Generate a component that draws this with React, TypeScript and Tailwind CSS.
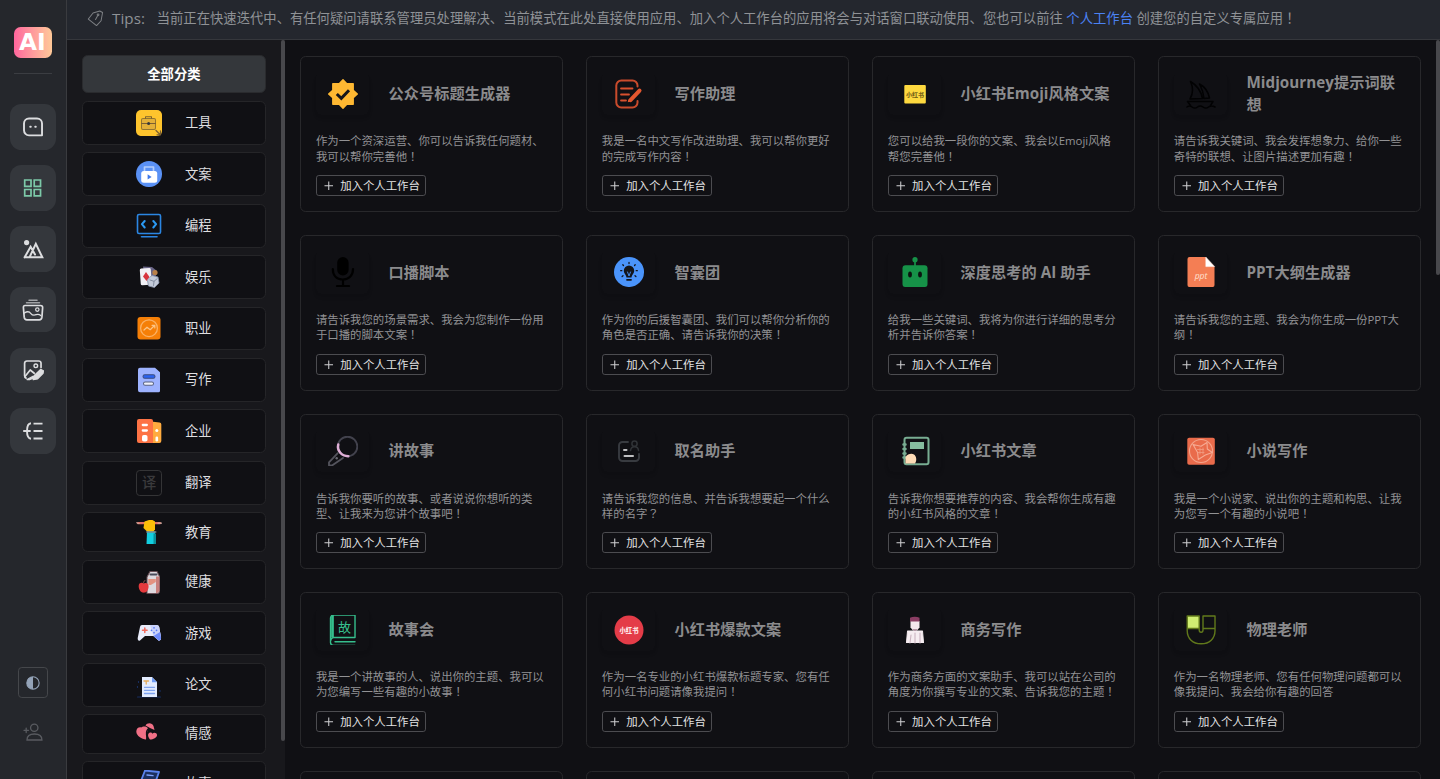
import type { ReactNode } from 'react';

const FONT = "font-['Open_Sans','Noto_Sans_CJK_SC',sans-serif]";

/* Full-width ! and ? are set from the TC face, which centres them in the em box. */
function Zh({ text }: { text: string }) {
  return (
    <>
      {text.split(/([！？])/).map((part, i) =>
        part === '！' || part === '？' ? (
          <span key={i} className="inline-block h-4 align-top font-['Noto_Sans_CJK_TC',sans-serif] leading-4">{part}</span>
        ) : (
          part
        ),
      )}
    </>
  );
}

/* ---------- rail icons ---------- */
function RailSvg({ children, color = 'text-[#dcdddf]' }: { children: ReactNode; color?: string }) {
  return (
    <svg viewBox="0 0 22 22" className={`h-[23.2px] w-[23.2px] ${color}`} fill="none" stroke="currentColor" strokeWidth="1.5" strokeLinecap="round" strokeLinejoin="round">
      {children}
    </svg>
  );
}

const rail: { key: string; icon: ReactNode }[] = [
  {
    key: 'chat',
    icon: (
      <RailSvg>
        <path d="M20 19.3H7A5 5 0 0 1 2 14.300V7.500a5 5 0 0 1 5-5h8a5 5 0 0 1 5 5z" strokeWidth="1.900" />
        <path d="M8.200 10.800h.6M13.200 10.800h.6" strokeWidth="1.900" />
      </RailSvg>
    ),
  },
  {
    key: 'apps',
    icon: (
      <RailSvg color="text-[#7cc9a8]">
        <path d="M2.700 3h6.300v6.300H2.700zM12.200 3h6.300v6.300h-6.300zM2.700 12.500h6.300v6.300H2.700zM12.200 12.500h6.300v6.300h-6.300z" strokeWidth="1.700" strokeLinejoin="miter" />
      </RailSvg>
    ),
  },
  {
    key: 'draw',
    icon: (
      <RailSvg>
        <circle cx="4.600" cy="4.600" r="2.600" fill="currentColor" stroke="none" />
        <path d="M2.600 19.300 8.600 8.800 13 16.500M7.500 19.300l6.300-13.500 6.500 13.500zM2.600 19.300h6" strokeWidth="2" strokeLinejoin="miter" />
      </RailSvg>
    ),
  },
  {
    key: 'gallery',
    icon: (
      <RailSvg>
        <path d="M7 1.300h8M4.500 3.800h13" strokeWidth="1.500" opacity=".65" />
        <path d="M3 6.500h15.500c1.500 0 2.200.9 2.100 2.100l-.7 9.500c-.2 1.700-1.300 2.700-2.700 2.700H4.900c-1.500 0-2.500-1-2.700-2.700l-.8-9.500C1.300 7.400 1.700 6.500 3 6.500z" strokeWidth="1.700" />
        <circle cx="15.300" cy="10.600" r="1.700" strokeWidth="1.200" />
        <path d="M2.400 14c3-2 5-1.500 6.500.5s3 2 5.200 1.200 3.400-.2 4.600.8" strokeWidth="1.300" />
      </RailSvg>
    ),
  },
  {
    key: 'edit',
    icon: (
      <RailSvg>
        <path d="M19 8.500V4.300A2.300 2.300 0 0 0 16.700 2H4.900a2.300 2.300 0 0 0-2.300 2.300v12.500c0 1.300.5 2 1.500 2.300" strokeWidth="1.700" />
        <circle cx="13.800" cy="6.800" r="1.800" strokeWidth="1.400" />
        <path d="M3 17.500 8.200 11l4 3.200" strokeWidth="1.700" />
        <path d="M12.300 16.300 18.600 10.300l2.800 1.500-.3 2.400-5.700 5.800-4.200.6zM5 20.500l6-3.300 2 1.500-5 1.800z" fill="currentColor" strokeWidth="1.200" />
      </RailSvg>
    ),
  },
  {
    key: 'mind',
    icon: (
      <RailSvg>
        <path d="M1.200 11h7.500M9 3.300c-3.800.3-4 4-4 7.700s.2 7.400 4 7.700M11.500 3.600h9M11.500 11h9M11.500 18.400h9" strokeWidth="1.900" strokeLinecap="butt" />
      </RailSvg>
    ),
  },
];

/* ---------- category icons ---------- */
function CatSvg({ children }: { children?: ReactNode }) {
  return (
    <svg viewBox="0 0 26 26" className="h-[27.4px] w-[27.4px] shrink-0" fill="none" strokeLinecap="round" strokeLinejoin="round">
      {children}
    </svg>
  );
}

const categories: { name: string; size: string; icon: ReactNode }[] = [
  {
    name: '工具',
    size: 'h-[46.15px]',
    icon: (
      <CatSvg>
        <rect width="26" height="26" rx="5" fill="#fec42d" />
        <rect x="5.500" y="8.500" width="14" height="11" rx="1.500" fill="#e3b038" stroke="#94752f" />
        <path d="M9.500 8.300V6.700h6v1.600M5.500 13.500h14" stroke="#7c6030" />
        <circle cx="12.600" cy="13.600" r="1.500" fill="#33373d" />
        <path d="m20 20.500 4 4M24.500 21v3.800H21" stroke="#7c6030" strokeWidth="1.300" />
      </CatSvg>
    ),
  },
  {
    name: '文案',
    size: 'h-[46.15px]',
    icon: (
      <CatSvg>
        <circle cx="13" cy="13" r="13" fill="#5a91f5" />
        <path d="M8.500 9.500V6h9v3.500" stroke="#b3cdfb" strokeWidth="1.700" />
        <rect x="5.200" y="10" width="16" height="11.800" rx="2.500" fill="#fff" />
        <path d="m11.600 13.300 4 2.600-4 2.600z" fill="#3e78ea" />
      </CatSvg>
    ),
  },
  {
    name: '编程',
    size: 'h-[46.15px]',
    icon: (
      <CatSvg>
        <rect x="1.500" y="1.500" width="23" height="19" rx="1.500" stroke="#2b86e3" strokeWidth="1.600" />
        <path d="M8.700 8l-2.800 3.200 2.800 3.300M17.300 8l2.800 3.200-2.800 3.300" stroke="#2b9af3" strokeWidth="2" />
        <path d="M5.500 23.700h15.500" stroke="#2b86e3" strokeWidth="1.600" />
      </CatSvg>
    ),
  },
  {
    name: '娱乐',
    size: 'h-[46.15px]',
    icon: (
      <CatSvg>
        <path d="m7 2.500 9 .5 5 4-2 9-9 4z" fill="#686486" />
        <circle cx="19" cy="8.500" r="2.600" fill="#b98048" />
        <rect x="4.300" y="4.300" width="11" height="16.700" rx="1.500" fill="#f1f0f5" transform="rotate(-4 10 13)" />
        <path d="m10 8 3.500 5-3 4-3.500-4.500z" fill="#d8343e" />
        <path d="m16 11.500 6 1.500 1 6-4.500 4.500-6-1.500-1-5.500z" fill="#c3cad9" stroke="#8790a8" strokeWidth=".8" />
        <path d="m14 16 4 1.300 3-2.500M18 17.500l-.5 4" stroke="#7b8499" strokeWidth=".9" />
      </CatSvg>
    ),
  },
  {
    name: '职业',
    size: 'h-[46.15px]',
    icon: (
      <CatSvg>
        <rect x="1.500" y="2" width="23" height="22.500" rx="3" fill="#f57f07" />
        <circle cx="13" cy="13.200" r="8.400" stroke="#fbb163" strokeWidth="1.300" />
        <path d="m8 15 3-2.800 3.200 2.500 4.300-4.200M16 10.300h2.800V13" stroke="#fdc484" strokeWidth="1.200" />
      </CatSvg>
    ),
  },
  {
    name: '写作',
    size: 'h-[46.15px]',
    icon: (
      <CatSvg>
        <path d="M4 .8h15l5 4.500v18.500a1.500 1.500 0 0 1-1.500 1.500H4a2 2 0 0 1-2-2V2.800a2 2 0 0 1 2-2z" fill="#9db2fe" />
        <rect x="7" y="7.800" width="12" height="3.400" rx="1.700" fill="#2a63f2" stroke="#3c4c80" />
        <rect x="7.500" y="15" width="10" height="3.300" rx="1.600" fill="#eef1fa" stroke="#596281" />
      </CatSvg>
    ),
  },
  {
    name: '企业',
    size: 'h-[46.15px]',
    icon: (
      <CatSvg>
        <path d="M15 3.500 23.500 4.500a1.800 1.800 0 0 1 1.800 1.800V23a2 2 0 0 1-2 2H15z" fill="#ffab3f" />
        <path d="M3 1h12a2 2 0 0 1 2 2v22H3a2 2 0 0 1-2-2V3a2 2 0 0 1 2-2z" fill="#fd7345" />
        <path d="M6.800 7h4M6.800 12.500h4" stroke="#fff" strokeWidth="2.300" />
        <rect x="6" y="17" width="5.500" height="6.500" rx="1.800" fill="#fff" />
        <circle cx="20.800" cy="12.500" r="1.500" fill="#fff" />
        <rect x="19.500" y="18.500" width="2.600" height="5" rx="1.300" fill="#fff" />
      </CatSvg>
    ),
  },
  {
    name: '翻译',
    size: 'h-[46.15px]',
    icon: (
      <span className="flex h-[27.4px] w-[27.4px] shrink-0 items-center justify-center rounded-[4px] border border-[#343436] text-[15px] leading-none font-medium text-[#3a3a3c]">
        译
      </span>
    ),
  },
  {
    name: '教育',
    size: 'h-[42.2px]',
    icon: (
      <CatSvg>
        <path d="M2 4.200h22" stroke="#e06f62" strokeWidth="2.200" />
        <path d="M.8 3.700 3 4.500M22 4.200h3.500" stroke="#c9a8a0" strokeWidth="1.200" />
        <path d="M8.500 2.500 13 1h3.500l2.500 1.500v8L17 13h-5.500l-4-4 .3-2z" fill="#fcbf08" />
        <path d="M11 12.500h8V25H10.500z" fill="#12cfe0" />
        <path d="M17.500 14.500H20V25h-2.500z" fill="#0a8e9a" />
        <path d="M10.800 13h9" stroke="#7f8a90" strokeWidth="1.400" />
      </CatSvg>
    ),
  },
  {
    name: '健康',
    size: 'h-[46.15px]',
    icon: (
      <CatSvg>
        <path d="M14 2.500h7l2.500 5v15.500l-1.500 1.500H11V8z" fill="#ded9de" stroke="#6b5057" />
        <path d="M20 7.500h3.500V22l-2 2H20z" fill="#c97f7c" />
        <path d="M12.300 10h7.500v3l-5 3h-2.500z" fill="#e49280" />
        <path d="M14.500 5.500h6" stroke="#4a4b5a" strokeWidth="2" />
        <path d="M3.500 14.500c2-1.500 3.500-.5 4.500 0 1.500-1 4-.5 4.500 2 .5 3.500-1.500 6.500-3.500 7-1 .2-1.500.2-2.500 0-3-.5-5-6.500-3-9z" fill="#e53a3d" />
        <path d="M7.500 14c0-1 .5-2 1.500-2.500" stroke="#7a4a44" />
      </CatSvg>
    ),
  },
  {
    name: '游戏',
    size: 'h-[46.15px]',
    icon: (
      <CatSvg>
        <path d="M6 5h14.500c1.500 0 2.300.7 2.700 2L25 17.500c.3 2-1 3.500-2.500 3l-5-4.500H9l-5 4.500c-1.500.8-2.500-.5-2.300-2.500L4 7c.3-1.300.8-2 2-2z" fill="#e9ecfb" />
        <path d="M14 5h6.500c1.500 0 2.300.7 2.700 2L25 17.500c.3 2-1 3.500-2.500 3l-5-4.500z" fill="#c9d2fb" />
        <path d="M17.500 16 24 12l1 5.500c.3 2-1 3.500-2.500 3z" fill="#6f8cfd" />
        <path d="M6.500 10.300h4.600M8.800 8v4.600" stroke="#f06a5c" strokeWidth="1.500" />
        <path d="M18 7.800v.01M18 12.700v.01M15.500 10.300h.01M20.500 10.300h.01" stroke="#5578f6" strokeWidth="1.700" />
      </CatSvg>
    ),
  },
  {
    name: '论文',
    size: 'h-[46.15px]',
    icon: (
      <CatSvg>
        <path d="M1.500 25h23" stroke="#162c60" strokeWidth="1.200" />
        <path d="M6 5h10l5 5v15H6z" fill="#e3ecff" />
        <path d="M16 5.200v5h5z" fill="#6f9cf6" />
        <path d="M8 9h4.500M10.200 9v3" stroke="#e5ac5c" strokeWidth="1.300" />
        <path d="M8.500 15.300h10M8.500 18.300h10M8.500 21.500h10" stroke="#7fa3ef" strokeWidth="1.300" />
        <path d="M1.500 15v.01M2.500 10v.01M24 19v.01" stroke="#1c3f8a" strokeWidth="1.300" />
      </CatSvg>
    ),
  },
  {
    name: '情感',
    size: 'h-[41.4px]',
    icon: (
      <CatSvg>
        <path d="M10 18.500c-4-.2-9.700-3.500-9.700-8 0-3.300 2.700-4.800 5-4 1.500-1.600 5.500-1.500 7 1L10.500 13z" fill="#f07086" />
        <path d="M9.500 4.500c1.500-3 6.500-3.300 8 .5l1 4-4.500-2z" fill="#f07086" />
        <path d="M14 18.500c-2-2.500-3-6 0-7 1-.2 2 .3 2.500 1.200 1-1.500 4.500-1 4.500 1.200.2 2.500-4 4.600-7 4.600z" fill="#f07086" />
        <path d="M12.500 7.500c-2.300 2-2.500 6-1 10" stroke="#101014" strokeWidth="1.400" />
      </CatSvg>
    ),
  },
  {
    name: '故事',
    size: 'h-[46.15px]',
    icon: (
      <CatSvg>
        <path d="m9 .5 14 1.500-5 14H3z" stroke="#5b83ee" strokeWidth="1.800" fill="#1c2f5e" />
        <path d="m11 5 6 .6M5 11h12" stroke="#7ea0fb" strokeWidth="1.400" />
      </CatSvg>
    ),
  },
];

/* ---------- app icons ---------- */
function AppSvg({ children }: { children: ReactNode }) {
  return (
    <svg viewBox="0 0 30 30" className="h-[31.600px] w-[31.600px]" fill="none" strokeLinecap="round" strokeLinejoin="round">
      {children}
    </svg>
  );
}

function RedBookText({ color, x, y, size }: { color: string; x: number; y: number; size: number }) {
  return (
    <text x={x} y={y} fontSize={size} fontWeight="900" fill={color} textAnchor="middle">
      小红书
    </text>
  );
}

const apps: { title: string; desc: string; icon: ReactNode }[] = [
  {
    title: '公众号标题生成器',
    desc: '作为一个资深运营、你可以告诉我任何题材、我可以帮你完善他！',
    icon: (
      <AppSvg>
        <path d="m15 .8 3.800 4h6.400v6.500L29.300 15l-4.100 3.800v6.500h-6.400L15 29.300l-3.800-4H4.800v-6.500L.7 15l4.100-3.700V4.800h6.400z" fill="#feb832" stroke="#feb832" strokeWidth="1.400" />
        <path d="m8.800 15 4.500 4.300 7.700-8" stroke="#15151a" strokeWidth="3" strokeLinecap="butt" strokeLinejoin="miter" />
      </AppSvg>
    ),
  },
  {
    title: '写作助理',
    desc: '我是一名中文写作改进助理、我可以帮你更好的完成写作内容！',
    icon: (
      <AppSvg>
        <path d="M23.500 7.500V6.500a5 5 0 0 0-5-5H7.300a5 5 0 0 0-5 5v17a5 5 0 0 0 5 5h11.200a5 5 0 0 0 5-5V22" stroke="#c94b2c" strokeWidth="2" />
        <path d="M7 9.500h11.500M7 15.500h8M7 21.500h5" stroke="#d8502e" strokeWidth="1.800" />
        <path d="m25.500 11.500-9 9.500" stroke="#e2572f" strokeWidth="4" />
        <path d="m14.200 20.200 2.600 2.300-3 .8z" fill="#e2572f" />
      </AppSvg>
    ),
  },
  {
    title: '小红书Emoji风格文案',
    desc: '您可以给我一段你的文案、我会以Emoji风格帮您完善他！',
    icon: (
      <AppSvg>
        <rect x="4.300" y="6" width="21.500" height="18.500" rx="1" fill="#fed93f" />
        <RedBookText color="#7a6618" x={15} y={17.600} size={6} />
      </AppSvg>
    ),
  },
  {
    title: 'Midjourney提示词联想',
    desc: '请告诉我关键词、我会发挥想象力、给你一些奇特的联想、让图片描述更加有趣！',
    icon: (
      <AppSvg>
        <path d="M4.500 2.500c6 3.500 10.500 9.500 12 17L4 20c3-5 3.500-11 .5-17.500zM13.500 5c5 2.500 8.500 7.500 10 14l-5.500.5C17.500 14 16 9.500 13.500 5zM1.500 22.500h25.500l-2.500 4M1.500 22.500l3 4M1 28c2-1.500 3-1.500 5 0s3.500 1.500 5.500 0 3.500-1.500 5.500 0 3.500 1.500 5.500 0 4-1.500 6.500 0" stroke="#020203" strokeWidth="1.500" />
      </AppSvg>
    ),
  },
  {
    title: '口播脚本',
    desc: '请告诉我您的场景需求、我会为您制作一份用于口播的脚本文案！',
    icon: (
      <AppSvg>
        <rect x="9.200" y="0" width="11.400" height="18.500" rx="5.700" fill="#000" />
        <path d="M4.800 12c0 6.500 4 10.500 10 10.500s10.200-4 10.200-10.500M15 22.500v6.500M9 29h12" stroke="#000" strokeWidth="2.200" />
      </AppSvg>
    ),
  },
  {
    title: '智囊团',
    desc: '作为你的后援智囊团、我们可以帮你分析你的角色是否正确、请告诉我你的决策！',
    icon: (
      <AppSvg>
        <circle cx="15" cy="15" r="15" fill="#4a94fb" />
        <path d="M15 8.500a5.200 5.200 0 0 1 5.200 5.200c0 3-2.200 3.300-2.700 6.800h-5c-.5-3.500-2.700-3.800-2.700-6.800A5.200 5.200 0 0 1 15 8.500z" fill="#13151b" />
        <path d="M13 22.800h4" stroke="#13151b" strokeWidth="1.800" />
        <path d="m13.500 15 1.500 4 1.500-4" stroke="#4a94fb" strokeWidth=".9" />
        <path d="M15 6.500v-1M9.500 8.500l-.7-.8M20.500 8.500l.7-.8M7.800 13.700H6.700M22.200 13.700h1.100M9 18.700l-.9.8M21 18.700l.9.8" stroke="#13151b" strokeWidth="1.300" />
      </AppSvg>
    ),
  },
  {
    title: '深度思考的 AI 助手',
    desc: '给我一些关键词、我将为你进行详细的思考分析并告诉你答案！',
    icon: (
      <AppSvg>
        <circle cx="15" cy="2.700" r="2.600" fill="#169248" />
        <path d="M15 3v6" stroke="#169248" strokeWidth="1.700" />
        <rect x="2.500" y="8.300" width="25" height="21.700" rx="3" fill="#169248" />
        <ellipse cx="10" cy="17.500" rx="1.900" ry="3" fill="#0b1410" />
        <ellipse cx="20" cy="17.500" rx="1.900" ry="3" fill="#0b1410" />
      </AppSvg>
    ),
  },
  {
    title: 'PPT大纲生成器',
    desc: '请告诉我您的主题、我会为你生成一份PPT大纲！',
    icon: (
      <AppSvg>
        <path d="M3.500 0h16l9 9.500v18.500a2 2 0 0 1-2 2h-23a2 2 0 0 1-2-2V2a2 2 0 0 1 2-2z" fill="#f47e54" />
        <path d="M19.800.3v9.300h8.500z" fill="#fff" stroke="#fff" strokeWidth=".5" />
        <text x="15" y="21.500" fontSize="8.500" fontStyle="italic" textAnchor="middle" fill="#ffe0d2">ppt</text>
      </AppSvg>
    ),
  },
  {
    title: '讲故事',
    desc: '告诉我你要听的故事、或者说说你想听的类型、让我来为您讲个故事吧！',
    icon: (
      <AppSvg>
        <circle cx="19.500" cy="10.500" r="9.800" stroke="#42424d" strokeWidth="1.900" />
        <path d="M10.300 8.500c-1.500 6 3 11.500 10 11.800" stroke="#dfafd6" strokeWidth="2.500" />
        <path d="m9.500 17.300-8.500 9v3.200h3l11-7.500" stroke="#54545d" strokeWidth="1.800" />
        <circle cx="8.700" cy="22.300" r="1.200" fill="#6a6a72" />
      </AppSvg>
    ),
  },
  {
    title: '取名助手',
    desc: '请告诉我您的信息、并告诉我想要起一个什么样的名字？',
    icon: (
      <AppSvg>
        <path d="M14 6H8.500A3.500 3.500 0 0 0 5 9.500v12A3.500 3.500 0 0 0 8.500 25h13a3.500 3.500 0 0 0 3.500-3.500V18" stroke="#383b40" strokeWidth="1.900" />
        <circle cx="20.500" cy="7.700" r="2.600" stroke="#303337" strokeWidth="1.500" />
        <path d="M16.500 14.500c.5-3 2-3.700 4-3.700s3.700.7 4 3.700" stroke="#303337" strokeWidth="1.500" />
        <path d="M10 14h2.500M10.500 20h8.500" stroke="#c0c0c2" strokeWidth="2" />
      </AppSvg>
    ),
  },
  {
    title: '小红书文章',
    desc: '告诉我你想要推荐的内容、我会帮你生成有趣的小红书风格的文章！',
    icon: (
      <AppSvg>
        <rect x="4.500" y="1.800" width="24" height="26.500" rx="2" stroke="#78ad92" strokeWidth="2" />
        <rect x="10" y="6" width="14" height="7" fill="#86bd9f" />
        <path d="M3.500 8.500h2M3.500 13h2M3.500 17.500h2M3.500 21.500h2" stroke="#78ad92" strokeWidth="2.500" />
        <path d="M5.500 27.500v-6.500c2-3 6-4 8.500-2.500 2.500 1.800 3 6 1 9z" fill="#fddbb5" />
      </AppSvg>
    ),
  },
  {
    title: '小说写作',
    desc: '我是一个小说家、说出你的主题和构思、让我为您写一个有趣的小说吧！',
    icon: (
      <AppSvg>
        <rect x="1.300" y="1.700" width="27.500" height="27" rx="1.800" fill="#e96b4b" />
        <circle cx="15" cy="15" r="11.500" stroke="#f4a58c" strokeWidth="1.100" />
        <path d="m7 8.500 8 1.700 6-3.700.3 6.500 5 3.500-7 2.500-7 4.500-.7-7z" stroke="#f6ab94" strokeWidth="1.100" />
        <path d="M11.500 13.500h6M12 16.500h6M14 12v6M17 12v6" stroke="#f09a80" strokeWidth=".9" />
      </AppSvg>
    ),
  },
  {
    title: '故事会',
    desc: '我是一个讲故事的人、说出你的主题、我可以为您编写一些有趣的小故事！',
    icon: (
      <AppSvg>
        <path d="M27 0H5.500a3 3 0 0 0-3 3v24.500a3.200 3.200 0 0 0 3.200 3H27M2.800 25.500a3 3 0 0 1 3-3H27V0M7 26.700h20" stroke="#36bf8d" strokeWidth="1.400" />
        <path d="M4.500 0v22.500" stroke="#36bf8d" strokeWidth="2.700" strokeLinecap="butt" />
        <text x="16.500" y="16.500" fontSize="13" fontWeight="400" textAnchor="middle" fill="#36bf8d">故</text>
      </AppSvg>
    ),
  },
  {
    title: '小红书爆款文案',
    desc: '作为一名专业的小红书爆款标题专家、您有任何小红书问题请像我提问！',
    icon: (
      <AppSvg>
        <circle cx="15" cy="15" r="14.500" fill="#e43c48" />
        <RedBookText color="#ffe9ea" x={15} y={17.600} size={6.300} />
      </AppSvg>
    ),
  },
  {
    title: '商务写作',
    desc: '作为商务方面的文案助手、我可以站在公司的角度为你撰写专业的文案、告诉我您的主题！',
    icon: (
      <AppSvg>
        <path d="M10.500 6h9v6.500l-2.500 3h-4l-2.500-3z" fill="#f3e6ec" />
        <path d="M10 6.500V2.800c3-1.500 7-1.300 9.500 0v3.700z" fill="#8a3d63" />
        <path d="M12.500 14.500h5l-2.500 2z" fill="#74405b" />
        <path d="M7.500 16h15l1 11.500h-17z" fill="#f6edf1" stroke="#f6edf1" />
        <path d="m11 20-1 8M15 18v10M20 18v10" stroke="#cbb5c1" strokeWidth="1.100" />
      </AppSvg>
    ),
  },
  {
    title: '物理老师',
    desc: '作为一名物理老师、您有任何物理问题都可以像我提问、我会给你有趣的回答',
    icon: (
      <AppSvg>
        <path d="M1.200 1h12v12.500h-12z" fill="#d0ee72" />
        <path d="M1.200 1h12v14c0 1.500.6 2.200 1.900 2.200S17 16.500 17 15V1h12v14.500c0 8-5.500 13.300-13.900 13.300S1.200 23.500 1.200 15.500zM1.200 13.500h12M17 13.500h12" stroke="#61791b" strokeWidth="1.400" />
      </AppSvg>
    ),
  },
  { title: '', desc: '', icon: null },
  { title: '', desc: '', icon: null },
  { title: '', desc: '', icon: null },
  { title: '', desc: '', icon: null },
];

function Rail() {
  return (
    <nav className="flex w-[70px] shrink-0 flex-col items-center border-r border-[#3a3b3f] bg-[#25272c] pt-[28.5px] pb-[39.5px]">
      <div className="flex h-[32.500px] w-10 items-center justify-center rounded-[7px] bg-linear-to-r from-[#ff659d] to-[#ffc998] pr-px pb-px font-['DejaVu_Sans',sans-serif] text-[24.500px] leading-none font-bold text-white">
        AI
      </div>
      <div className="mt-4 h-px w-10 bg-[#3b3d42]" />
      <div className="mt-8 flex flex-col gap-4">
        {rail.map((r) => (
          <button key={r.key} className="flex h-12 w-12 items-center justify-center rounded-xl bg-[#34373c]">
            {r.icon}
          </button>
        ))}
      </div>
      <button className="mt-auto flex h-8 w-8 items-center justify-center rounded-[4px] border border-[#45474b]">
        <svg viewBox="0 0 14 14" className="h-[14.700px] w-[14.700px]">
          <circle cx="7" cy="7" r="6.200" fill="none" stroke="#94a3b8" strokeWidth="1.100" />
          <path d="M7 .8a6.200 6.200 0 0 0 0 12.400z" fill="#94a3b8" />
        </svg>
      </button>
      <svg viewBox="0 0 20 18" className="mt-[27px] h-[19px] w-[21px]" fill="none" stroke="#595b60" strokeWidth="1.300" strokeLinecap="round">
        <circle cx="11.300" cy="4.700" r="3.700" />
        <path d="M4 17c0-3.800 3-6 7.500-6s7.500 2.200 7.500 6zM1 7.300h4.500M3.200 5v4.600" />
      </svg>
    </nav>
  );
}

function TipsBar() {
  return (
    <header className="flex h-[42.5px] shrink-0 items-center border-b-2 border-[#35373c] bg-[#24272e] pb-[3px] pl-[22px] text-[14px] tracking-[0.03px] whitespace-nowrap text-[#8f9296]">
      <svg viewBox="0 0 17 17" className="h-[18px] w-[18px]" fill="none" stroke="#7e8185" strokeWidth="1" strokeLinejoin="round" strokeLinecap="round">
        <path d="m6 3 6.700-2 2.800 1.500-1.500 8.200-4.500 4.800L1.300 9z" />
        <circle cx="11" cy="4.800" r=".9" />
        <path d="M10.300 6.200 8.500 9.500" />
      </svg>
      <span className="ml-[8px] w-[47px] text-[16px]">Tips:</span>
      <span>
        当前正在快速迭代中、有任何疑问请联系管理员处理解决、当前模式在此处直接使用应用、加入个人工作台的应用将会与对话窗口联动使用、您也可以前往{' '}
        <a className="text-[#4b82f3]">个人工作台</a> 创建您的自定义专属应用
        <span className="font-['Noto_Sans_CJK_TC',sans-serif]">！</span>
      </span>
    </header>
  );
}

function Categories() {
  return (
    <aside className="flex w-[229.500px] shrink-0 bg-[#18181c]">
      <div className="flex min-w-0 flex-1 flex-col gap-2 overflow-hidden pt-[15.200px] pr-[15.500px] pl-[16.300px] text-[14px] text-[#dfdfe0]">
        <div className="flex h-[40.500px] shrink-0 items-center justify-center rounded-md border border-[#2a2b2e] bg-[#34373b] pt-px font-bold text-white">
          全部分类
        </div>
        {categories.map((c) => (
          <div key={c.name} className={`flex shrink-0 items-center justify-center gap-6 rounded-md border border-[#252528] bg-[#101014] ${c.size}`}>
            {c.icon}
            <span className="pt-px">{c.name}</span>
          </div>
        ))}
      </div>
      <div className="h-[737px] w-[4.200px] shrink-0 rounded-full bg-[#48484c]" />
    </aside>
  );
}

function AppCard({ app }: { app: (typeof apps)[number] }) {
  return (
    <article className="h-[164px] rounded-md border border-[#28282b] p-4">
      {app.title && (
        <>
          <div className="flex h-[45px] items-center gap-[20.500px]">
            <div className="flex h-[45px] w-14 shrink-0 items-center justify-center rounded-md pl-px shadow-md shadow-black/5">
              {app.icon}
            </div>
            <h3 className="text-[16px] leading-[23px] font-bold tracking-[0.05px] text-[#8b8b8d]">{app.title}</h3>
          </div>
          <p className="mt-[19px] h-8 text-[12px] leading-4 text-[#929294]">
            <Zh text={app.desc} />
          </p>
          <button className="mt-[12.200px] flex h-[22px] w-[116px] items-center rounded-[3px] border border-[#4c4c50] pl-[7.500px] text-[12px] leading-none whitespace-nowrap text-[#e3e3e4]">
            <svg viewBox="0 0 10 10" className="mr-[7px] h-[10px] w-[10px]" stroke="#cfcfd1" strokeWidth="1.100">
              <path d="M5 .5v9M.5 5h9" />
            </svg>
            加入个人工作台
          </button>
        </>
      )}
    </article>
  );
}

export default function App() {
  return (
    <div className={`flex h-[calc(100vh/0.95)] w-[calc(100vw/0.95)] overflow-hidden bg-[#101014] [zoom:0.95] ${FONT}`}>
      <Rail />
      <div className="flex min-w-0 flex-1 flex-col">
        <TipsBar />
        <div className="flex min-h-0 flex-1">
          <Categories />
          <main className="flex min-w-0 flex-1">
            <div className="grid min-w-0 flex-1 grid-cols-4 content-start gap-6 overflow-hidden px-4 pt-[16.800px]">
              {apps.map((a, i) => (
                <AppCard key={i} app={a} />
              ))}
            </div>
            <div className="h-[247px] w-[4.200px] shrink-0 rounded-full bg-[#48484c]" />
          </main>
        </div>
      </div>
    </div>
  );
}
